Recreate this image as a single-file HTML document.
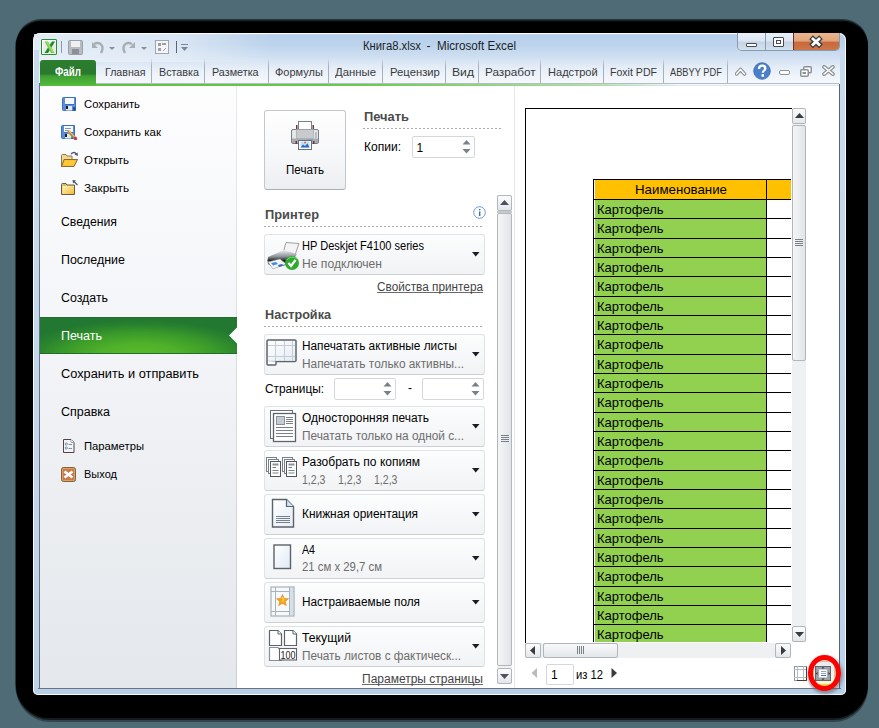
<!DOCTYPE html><html><head><meta charset="utf-8"><style>html,body{margin:0;padding:0;width:879px;height:728px;overflow:hidden;position:relative}body{font-family:"Liberation Sans",sans-serif}</style></head><body><div style="position:absolute;left:0;top:0;width:879px;height:728px;background:#4f6b75"></div>
<div style="position:absolute;left:16px;top:22px;width:852px;height:696px;background:#000;border-radius:25px 25px 34px 34px;box-shadow:0 -1.5px 0 0 rgba(0,0,0,0.8),0 -3px 0 0 rgba(0,0,0,0.5),-1px 0 0 0 rgba(0,0,0,0.5),0 2px 0 0 rgba(0,0,0,0.6),0 4px 0 0 rgba(0,0,0,0.35)"></div>
<div style="position:absolute;left:33px;top:33px;width:813px;height:662px;border-radius:7px 7px 5px 5px;background:linear-gradient(#e6eef8 0px,#b6cfea 2px,#bcd3ec 12px,#cfdff1 24px,#e4edf7 34px,#f0f5fb 44px,#f7f9fc 52px,#c0d4eb 53px,#b8cfe8 100%);box-shadow:inset 0 0 0 1px rgba(255,255,255,0.85)"></div>
<div style="position:absolute;left:34px;top:34px;width:500px;height:28px;background:linear-gradient(95deg,rgba(236,242,249,0.8) 0,rgba(236,242,249,0.65) 140px,rgba(236,242,249,0) 240px)"></div>
<div style="position:absolute;left:737px;top:33px;width:103px;height:18px;border:1px solid #8a9bb0;border-top:none;border-radius:0 0 5px 5px;overflow:hidden;box-sizing:border-box">
<div style="position:absolute;left:0;top:0;width:27px;height:18px;background:linear-gradient(#e9f0f8,#dbe5f1 45%,#c5d3e3 50%,#d6e2ef)"></div>
<div style="position:absolute;left:27px;top:0;width:1px;height:18px;background:#8a9bb0"></div>
<div style="position:absolute;left:28px;top:0;width:27px;height:18px;background:linear-gradient(#e9f0f8,#dbe5f1 45%,#c5d3e3 50%,#d6e2ef)"></div>
<div style="position:absolute;left:55px;top:0;width:1px;height:18px;background:#6a3030"></div>
<div style="position:absolute;left:56px;top:0;width:47px;height:18px;background:linear-gradient(#eab690,#e3a57a 45%,#c8693e 50%,#cc7848)"></div>
</div>
<div style="position:absolute;left:746px;top:43px;width:11px;height:4px;background:#fff;border:1px solid #444c58;border-radius:1px;box-sizing:border-box"></div>
<div style="position:absolute;left:773px;top:37px;width:11px;height:10px;border:1px solid #444c58;background:#fff;box-sizing:border-box;border-radius:1px"><div style="position:absolute;left:2px;top:2px;width:5px;height:4px;border:1px solid #444c58;box-sizing:border-box"></div></div>
<svg style="position:absolute;left:808px;top:34px" width="16" height="15"><path d="M5 5 L11 10.5 M11 5 L5 10.5" stroke="#3a3e46" stroke-width="5.4" stroke-linecap="square"/><path d="M5 5 L11 10.5 M11 5 L5 10.5" stroke="#fff" stroke-width="2.8" stroke-linecap="square"/></svg>
<div style="position:absolute;left:41px;top:39px;width:16px;height:16px;box-sizing:border-box;border:1px solid #2f8a35;border-radius:1px;background:linear-gradient(135deg,#fff,#dfeedd)"></div>
<svg style="position:absolute;left:41px;top:39px" width="16" height="16"><path d="M2 14 L2 2.5 L13.5 2.5 L13.5 14 Z" fill="#e0e2e4" opacity="0.5"/><path d="M11 2.5 L14 2.5 L7 14 L3.5 14 Z" fill="#1a8a2a"/><path d="M3.5 2.5 L7 2.5 L13.5 14 L10 14 Z" fill="#7ad04a"/><path d="M5 2.5 L6.5 2.5 L12.5 13 L11 13 Z" fill="#a8e070" opacity="0.7"/></svg>
<div style="position:absolute;left:61px;top:41px;width:1px;height:12px;background:#8c9aa8"></div>
<svg style="position:absolute;left:68px;top:40px" width="16" height="15"><rect x="0.5" y="0.5" width="14" height="14" rx="1" fill="#b8bcc0" stroke="#9aa0a6"/><rect x="3" y="1" width="9" height="6" fill="#eef0f2"/><rect x="4" y="9" width="7" height="5" fill="#8a9096"/></svg>
<svg style="position:absolute;left:90px;top:40px" width="58" height="15"><path d="M4 4 C10 1 15 6 11 13" stroke="#a8aeb4" stroke-width="2.5" fill="none"/><path d="M2 2 L2 8 L8 8 Z" fill="#a8aeb4"/><path d="M19 7 L25 7 L22 10 Z" fill="#8a9098"/><path d="M42 4 C36 1 31 6 35 13" stroke="#a8aeb4" stroke-width="2.5" fill="none"/><path d="M45 2 L45 8 L39 8 Z" fill="#a8aeb4"/><path d="M51 7 L57 7 L54 10 Z" fill="#8a9098"/></svg>
<svg style="position:absolute;left:155px;top:40px" width="15" height="15"><rect x="0.5" y="0.5" width="13" height="13" fill="#f4f5f6" stroke="#a0a6ac"/><rect x="3" y="3" width="3" height="3" fill="#9aa0a6"/><rect x="7" y="3" width="4" height="2" fill="#9aa0a6"/><rect x="3" y="8" width="3" height="3" fill="#9aa0a6"/><path d="M8 11 L11 8" stroke="#9aa0a6"/></svg>
<div style="position:absolute;left:176px;top:41px;width:1px;height:12px;background:#5c6670"></div>
<svg style="position:absolute;left:180px;top:44px" width="10" height="8"><rect x="1" y="0" width="7" height="1" fill="#7c8690"/><path d="M1 3 L8 3 L4.5 7 Z" fill="#7c8690"/></svg>
<div style="position:absolute;left:40px;top:83px;width:799px;height:1px;background:#b4bcc4"></div>
<div style="position:absolute;left:40px;top:84px;width:799px;height:2px;background:linear-gradient(90deg,#5cbf3c,#6cc850 40%,rgba(140,210,120,0.6) 70%,rgba(200,230,200,0) 80%)"></div>
<div style="position:absolute;left:40px;top:60px;width:56px;height:25px;border-radius:3px 3px 0 0;background:linear-gradient(#2c7d2e,#2a7a2e 55%,#3fa134 65%,#52b83a)"></div>
<div style="position:absolute;left:151px;top:59px;width:1px;height:24px;background:linear-gradient(rgba(170,180,190,0.2),#a8b0b8 30%,#a8b0b8)"></div>
<div style="position:absolute;left:204px;top:59px;width:1px;height:24px;background:linear-gradient(rgba(170,180,190,0.2),#a8b0b8 30%,#a8b0b8)"></div>
<div style="position:absolute;left:268px;top:59px;width:1px;height:24px;background:linear-gradient(rgba(170,180,190,0.2),#a8b0b8 30%,#a8b0b8)"></div>
<div style="position:absolute;left:328px;top:59px;width:1px;height:24px;background:linear-gradient(rgba(170,180,190,0.2),#a8b0b8 30%,#a8b0b8)"></div>
<div style="position:absolute;left:382px;top:59px;width:1px;height:24px;background:linear-gradient(rgba(170,180,190,0.2),#a8b0b8 30%,#a8b0b8)"></div>
<div style="position:absolute;left:445px;top:59px;width:1px;height:24px;background:linear-gradient(rgba(170,180,190,0.2),#a8b0b8 30%,#a8b0b8)"></div>
<div style="position:absolute;left:478px;top:59px;width:1px;height:24px;background:linear-gradient(rgba(170,180,190,0.2),#a8b0b8 30%,#a8b0b8)"></div>
<div style="position:absolute;left:540px;top:59px;width:1px;height:24px;background:linear-gradient(rgba(170,180,190,0.2),#a8b0b8 30%,#a8b0b8)"></div>
<div style="position:absolute;left:603px;top:59px;width:1px;height:24px;background:linear-gradient(rgba(170,180,190,0.2),#a8b0b8 30%,#a8b0b8)"></div>
<div style="position:absolute;left:663px;top:59px;width:1px;height:24px;background:linear-gradient(rgba(170,180,190,0.2),#a8b0b8 30%,#a8b0b8)"></div>
<div style="position:absolute;left:727px;top:59px;width:1px;height:24px;background:linear-gradient(rgba(170,180,190,0.2),#a8b0b8 30%,#a8b0b8)"></div>
<svg style="position:absolute;left:735px;top:67px" width="12" height="9"><path d="M1.5 7 L5.5 2.5 L9.5 7" stroke="#8c9298" stroke-width="3.6" fill="none" stroke-linejoin="round" stroke-linecap="round"/><path d="M1.5 7 L5.5 2.5 L9.5 7" stroke="#fff" stroke-width="1.4" fill="none" stroke-linejoin="round" stroke-linecap="round"/></svg>
<svg style="position:absolute;left:753px;top:62px" width="18" height="18"><circle cx="9" cy="9" r="8.3" fill="#4a80c8" stroke="#3a6aae" stroke-width="0.8"/><path d="M6 7 C6 4.6 7.5 3.6 9.2 3.6 C11 3.6 12.3 4.8 12.3 6.4 C12.3 8.4 9.8 8.6 9.8 10.8" stroke="#fff" stroke-width="2.3" fill="none"/><rect x="8.5" y="12.2" width="2.5" height="2.5" fill="#fff"/></svg>
<div style="position:absolute;left:779px;top:70px;width:11px;height:5px;border:1.5px solid #8c9298;border-radius:2px;box-sizing:border-box;background:#fff"></div>
<svg style="position:absolute;left:800px;top:66px" width="12" height="11"><rect x="3.75" y="0.75" width="7.5" height="6" rx="1" fill="#fff" stroke="#8c9298" stroke-width="1.5"/><rect x="0.75" y="3.75" width="7.5" height="6.5" rx="1" fill="#fff" stroke="#8c9298" stroke-width="1.5"/><rect x="2.5" y="6" width="3.5" height="2" fill="#8c9298"/></svg>
<svg style="position:absolute;left:822px;top:65px" width="13" height="11"><path d="M2.2 2 L10.8 9 M10.8 2 L2.2 9" stroke="#8c9298" stroke-width="4" stroke-linecap="round"/><path d="M2.2 2 L10.8 9 M10.8 2 L2.2 9" stroke="#fff" stroke-width="1.6" stroke-linecap="round"/></svg>
<div style="position:absolute;left:39px;top:86px;width:801px;height:602px;background:#fff"></div>
<div style="position:absolute;left:34px;top:50px;width:5px;height:639px;background:linear-gradient(#c8daee,#bcd2ea)"></div>
<div style="position:absolute;left:840px;top:50px;width:5px;height:639px;background:linear-gradient(#c8daee,#bcd2ea)"></div>
<div style="position:absolute;left:39px;top:83px;width:1px;height:606px;background:#6a7480"></div>
<div style="position:absolute;left:38px;top:688px;width:803px;height:1px;background:#6a7480"></div>
<div style="position:absolute;left:839px;top:84px;width:1px;height:605px;background:#5a6470"></div>
<div style="position:absolute;left:40px;top:86px;width:196px;height:602px;background:linear-gradient(#fdfdfe,#f3f5f8 40%,#e4e7eb)"></div>
<div style="position:absolute;left:236px;top:86px;width:1px;height:602px;background:linear-gradient(#e8ebee,#c9ced4)"></div>
<div style="position:absolute;left:40px;top:317px;width:197px;height:37px;box-sizing:border-box;border-top:1px solid #1f6f2c;border-bottom:1px solid #1f6f2c;background:radial-gradient(ellipse 120px 36px at 100px 38px,#5cbc2c,#4fb02a 35%,#3a9a2a 65%,#2a842e 85%,#227830)"></div>
<svg style="position:absolute;left:228px;top:327px" width="10" height="18"><path d="M9.5 0 L1 8.5 L9.5 17 Z" fill="#fff"/></svg>
<svg style="position:absolute;left:62px;top:97px" width="15" height="15"><path d="M0.5 1.5 Q0.5 0.5 1.5 0.5 H13.5 V13.5 H1.5 Q0.5 13.5 0.5 12.5 Z" fill="#5b8fd9" stroke="#3d6fbf"/><rect x="3" y="1" width="9" height="6" fill="#f4f7fb"/><rect x="3" y="7" width="9" height="1" fill="#3d6fbf"/><rect x="4" y="9" width="6" height="4.5" fill="#dfe8f3"/><rect x="4" y="9" width="2" height="3" fill="#1a1a2a"/><rect x="11" y="10" width="2.5" height="3.5" fill="#2050a0"/></svg>
<svg style="position:absolute;left:61px;top:125px" width="15" height="15"><path d="M0.5 1.5 Q0.5 0.5 1.5 0.5 H13.5 V13.5 H1.5 Q0.5 13.5 0.5 12.5 Z" fill="#5b8fd9" stroke="#3d6fbf"/><rect x="3" y="1" width="9" height="6" fill="#f4f7fb"/><rect x="3" y="7" width="9" height="1" fill="#3d6fbf"/><rect x="4" y="9" width="6" height="4.5" fill="#dfe8f3"/><rect x="4" y="9" width="2" height="3" fill="#1a1a2a"/><rect x="11" y="10" width="2.5" height="3.5" fill="#2050a0"/></svg>
<svg style="position:absolute;left:61px;top:125px" width="17" height="15"><path d="M4 3.5 H10 M4 5.5 H8" stroke="#8a96a4"/><path d="M7 6 L14 13" stroke="#d89040" stroke-width="3"/><path d="M7.5 5.5 L13.5 11.5" stroke="#f0c070" stroke-width="1"/><path d="M9 9 L14.5 14.5" stroke="#60a040" stroke-width="1"/><circle cx="14.5" cy="13.5" r="1.7" fill="#c04050"/></svg>
<svg style="position:absolute;left:61px;top:151px" width="18" height="17"><path d="M0.5 4.5 Q0.5 3.5 1.5 3.5 H5 L6 5 H11 V15.5 H0.5 Z" fill="#f6d78a" stroke="#8a7a5a"/><path d="M3 8.5 H16.5 L13 15.5 H0.5 Z" fill="#f8b820" stroke="#8a6a3a"/><path d="M4 9.5 H15 L12.5 14.5 H2 Z" fill="#fcc83a"/><path d="M10 3 Q13 0 15.5 3" stroke="#4a5a6a" stroke-width="1.3" fill="none"/><path d="M13.5 3.5 L17 5 L16.5 1.5 Z" fill="#4a5a6a"/></svg>
<svg style="position:absolute;left:61px;top:179px" width="18" height="17"><path d="M0.5 5.5 Q0.5 4.5 1.5 4.5 H5 L6 6 H13.5 V15.5 H0.5 Z" fill="#f2c670" stroke="#6a5a4a"/><path d="M1.5 7 H13 V15 H1.5 Z" fill="url(#fg)"/><defs><linearGradient id="fg" x1="0" y1="0" x2="1" y2="1"><stop offset="0" stop-color="#fff6c0"/><stop offset="1" stop-color="#f4b830"/></linearGradient></defs><path d="M2 6 H5" stroke="#8ac060"/><path d="M16.5 6 L12.5 2" stroke="#4a5a6a" stroke-width="1.3"/><path d="M11.5 1 L15 1.5 L12 4.5 Z" fill="#4a5a6a"/></svg>
<svg style="position:absolute;left:63px;top:439px" width="12" height="14"><path d="M0.5 0.5 H8 L11 3.5 V13.5 H0.5 Z" fill="#f0f4f8" stroke="#5a4040"/><path d="M8 0.5 V3.5 H11" fill="#fff" stroke="#8a96a4" stroke-width="0.8"/><circle cx="3.3" cy="5" r="1.1" fill="none" stroke="#6a7a8a" stroke-width="0.8"/><circle cx="3.3" cy="9" r="1.1" fill="none" stroke="#6a7a8a" stroke-width="0.8"/><path d="M5.5 5.5 H9 M5.5 9.5 H9" stroke="#6a7a8a" stroke-width="0.8"/></svg>
<svg style="position:absolute;left:61px;top:467px" width="15" height="15"><rect x="0.5" y="0.5" width="14" height="14" rx="2" fill="#c87a4a" stroke="#7a6a30"/><rect x="1.5" y="1.5" width="12" height="12" rx="1" fill="none" stroke="#e8a478" stroke-width="0.8"/><path d="M3.5 4.5 L11.5 10.5 M11.5 4.5 L3.5 10.5" stroke="#fff" stroke-width="2.6"/></svg>
<div style="position:absolute;left:237px;top:86px;width:278px;height:602px;background:#fff"></div>
<div style="position:absolute;left:514px;top:86px;width:1px;height:602px;background:#e4e8ec"></div>
<div style="position:absolute;left:264px;top:110px;width:82px;height:80px;box-sizing:border-box;border:1px solid #c4c8cc;border-bottom-color:#a8aeb4;border-radius:3px;background:linear-gradient(#fefefe,#f6f7f9 60%,#eceef1)"></div>
<svg style="position:absolute;left:290px;top:120px" width="30" height="31"><rect x="8.5" y="1.5" width="13" height="9" fill="#fff" stroke="#7a8088"/><rect x="6" y="5" width="1.5" height="4" fill="#6a3a3a"/><rect x="22.5" y="5" width="1.5" height="4" fill="#6a3a3a"/><rect x="1.5" y="9.5" width="27" height="14" rx="1.5" fill="#e4e6e8" stroke="#7a8088"/><rect x="6.5" y="9.5" width="17" height="9" fill="#c8cacc" stroke="#9aa0a6" stroke-width="0.6"/><rect x="2" y="18.5" width="26" height="4.5" fill="#a8acb0"/><rect x="18" y="19.5" width="5" height="1.5" fill="#6aa0e0"/><path d="M25 13 H27 M25 15 H27 M25 17 H27" stroke="#7a8088" stroke-width="0.8"/><rect x="5.5" y="21" width="1.5" height="3" fill="#6a3a3a"/><rect x="23" y="21" width="1.5" height="3" fill="#6a3a3a"/><rect x="8.5" y="20.5" width="13" height="9" fill="#fff" stroke="#6a7078"/><rect x="10.5" y="21.5" width="9" height="6" fill="#bfe0f8"/><path d="M10.5 27.5 L13 24.5 L15 26 L17.5 23.5 L19.5 27.5 Z" fill="#2a6ac8"/><circle cx="15" cy="22.5" r="1" fill="#e06a3a"/></svg>
<div style="position:absolute;left:363px;top:128px;width:138px;height:1px;background:repeating-linear-gradient(90deg,#a8acb0 0 2px,transparent 2px 4px)"></div>
<div style="position:absolute;left:412px;top:136px;width:63px;height:22px;box-sizing:border-box;border:1px solid #d4d8dc;border-radius:2px;background:#fff"></div>
<svg style="position:absolute;left:462px;top:139px" width="9" height="16"><path d="M0.5 5.5 L8.5 5.5 L4.5 1 Z" fill="#7a8088"/><path d="M0.5 10 L8.5 10 L4.5 14.5 Z" fill="#7a8088"/></svg>
<svg style="position:absolute;left:473px;top:206px" width="13" height="13"><circle cx="6.5" cy="6.5" r="5.8" fill="#fff" stroke="#6a9ad8"/><rect x="6" y="5.5" width="1.4" height="4.5" fill="#3a6ac0"/><rect x="6" y="3" width="1.4" height="1.4" fill="#3a6ac0"/></svg>
<div style="position:absolute;left:264px;top:226px;width:220px;height:1px;background:repeating-linear-gradient(90deg,#a8acb0 0 2px,transparent 2px 4px)"></div>
<div style="position:absolute;left:264px;top:234px;width:221px;height:41px;box-sizing:border-box;border:1px solid #dfe2e6;border-bottom-color:#cdd1d6;border-radius:3px;background:linear-gradient(#fcfdfd,#f7f8f9 50%,#f1f3f5)"></div>
<svg style="position:absolute;left:472px;top:252px" width="8" height="5"><path d="M0 0 L7.5 0 L3.75 4.5 Z" fill="#1a1e24"/></svg>
<svg style="position:absolute;left:266px;top:240px" width="34" height="34"><defs><linearGradient id="pb" x1="0" y1="0" x2="0" y2="1"><stop offset="0" stop-color="#f0f2f4"/><stop offset="0.45" stop-color="#8a9098"/><stop offset="0.7" stop-color="#2a2426"/><stop offset="1" stop-color="#3a3032"/></linearGradient></defs><path d="M20 2.5 L33 3.5 L29 15 L17 13 Z" fill="#f4f4f4" stroke="#8a8a8a" stroke-width="0.8"/><path d="M2 17 L18 10 L31 14 L26 22 L6 25 L1.5 21 Z" fill="url(#pb)"/><path d="M1.5 20 L6 24 L26 21 L24 24 L8 28 L2 24 Z" fill="#5a2a2a" opacity="0.8"/><path d="M2 22 L14 19 L20 24 L7 29 Z" fill="#f4f6f8" stroke="#9aa0a6" stroke-width="0.6"/><path d="M5 23 L10 22 L12 24 L7 25.5 Z" fill="#4a88e0"/><path d="M12 25 L16 24 L17.5 25.5 L13 27 Z" fill="#2a68c8"/><circle cx="26" cy="23" r="7" fill="#2eaa30"/><path d="M21 20 A6.5 6.5 0 0 1 31 19" stroke="#7ad870" stroke-width="1" fill="none"/><path d="M22.5 23 L25 26 L29.5 20" stroke="#fff" stroke-width="2.2" fill="none"/></svg>
<div style="position:absolute;left:377px;top:292px;width:106px;height:1px;background:#6a6a6a"></div>
<div style="position:absolute;left:264px;top:326px;width:220px;height:1px;background:repeating-linear-gradient(90deg,#a8acb0 0 2px,transparent 2px 4px)"></div>
<div style="position:absolute;left:264px;top:334px;width:221px;height:41px;box-sizing:border-box;border:1px solid #dfe2e6;border-bottom-color:#cdd1d6;border-radius:3px;background:linear-gradient(#fcfdfd,#f7f8f9 50%,#f1f3f5)"></div>
<svg style="position:absolute;left:472px;top:352px" width="8" height="5"><path d="M0 0 L7.5 0 L3.75 4.5 Z" fill="#1a1e24"/></svg>
<div style="position:absolute;left:334px;top:378px;width:62px;height:22px;box-sizing:border-box;border:1px solid #d4d8dc;border-radius:2px;background:#fff"></div>
<svg style="position:absolute;left:383px;top:381px" width="9" height="16"><path d="M0.5 5.5 L8.5 5.5 L4.5 1 Z" fill="#7a8088"/><path d="M0.5 10 L8.5 10 L4.5 14.5 Z" fill="#7a8088"/></svg>
<div style="position:absolute;left:422px;top:378px;width:62px;height:22px;box-sizing:border-box;border:1px solid #d4d8dc;border-radius:2px;background:#fff"></div>
<svg style="position:absolute;left:471px;top:381px" width="9" height="16"><path d="M0.5 5.5 L8.5 5.5 L4.5 1 Z" fill="#7a8088"/><path d="M0.5 10 L8.5 10 L4.5 14.5 Z" fill="#7a8088"/></svg>
<div style="position:absolute;left:264px;top:406px;width:221px;height:41px;box-sizing:border-box;border:1px solid #dfe2e6;border-bottom-color:#cdd1d6;border-radius:3px;background:linear-gradient(#fcfdfd,#f7f8f9 50%,#f1f3f5)"></div>
<svg style="position:absolute;left:472px;top:424px" width="8" height="5"><path d="M0 0 L7.5 0 L3.75 4.5 Z" fill="#1a1e24"/></svg>
<div style="position:absolute;left:264px;top:450px;width:221px;height:41px;box-sizing:border-box;border:1px solid #dfe2e6;border-bottom-color:#cdd1d6;border-radius:3px;background:linear-gradient(#fcfdfd,#f7f8f9 50%,#f1f3f5)"></div>
<svg style="position:absolute;left:472px;top:468px" width="8" height="5"><path d="M0 0 L7.5 0 L3.75 4.5 Z" fill="#1a1e24"/></svg>
<div style="position:absolute;left:264px;top:494px;width:221px;height:41px;box-sizing:border-box;border:1px solid #dfe2e6;border-bottom-color:#cdd1d6;border-radius:3px;background:linear-gradient(#fcfdfd,#f7f8f9 50%,#f1f3f5)"></div>
<svg style="position:absolute;left:472px;top:512px" width="8" height="5"><path d="M0 0 L7.5 0 L3.75 4.5 Z" fill="#1a1e24"/></svg>
<div style="position:absolute;left:264px;top:538px;width:221px;height:41px;box-sizing:border-box;border:1px solid #dfe2e6;border-bottom-color:#cdd1d6;border-radius:3px;background:linear-gradient(#fcfdfd,#f7f8f9 50%,#f1f3f5)"></div>
<svg style="position:absolute;left:472px;top:556px" width="8" height="5"><path d="M0 0 L7.5 0 L3.75 4.5 Z" fill="#1a1e24"/></svg>
<div style="position:absolute;left:264px;top:582px;width:221px;height:41px;box-sizing:border-box;border:1px solid #dfe2e6;border-bottom-color:#cdd1d6;border-radius:3px;background:linear-gradient(#fcfdfd,#f7f8f9 50%,#f1f3f5)"></div>
<svg style="position:absolute;left:472px;top:600px" width="8" height="5"><path d="M0 0 L7.5 0 L3.75 4.5 Z" fill="#1a1e24"/></svg>
<div style="position:absolute;left:264px;top:626px;width:221px;height:41px;box-sizing:border-box;border:1px solid #dfe2e6;border-bottom-color:#cdd1d6;border-radius:3px;background:linear-gradient(#fcfdfd,#f7f8f9 50%,#f1f3f5)"></div>
<svg style="position:absolute;left:472px;top:644px" width="8" height="5"><path d="M0 0 L7.5 0 L3.75 4.5 Z" fill="#1a1e24"/></svg>
<div style="position:absolute;left:362px;top:684px;width:121px;height:1px;background:#6a6a6a"></div>
<svg style="position:absolute;left:266px;top:339px" width="32" height="27"><rect x="1" y="1" width="29" height="21.5" rx="1" fill="#fff" stroke="#5c636b" stroke-width="1.5"/><rect x="2" y="2" width="27" height="19.5" fill="url(#sg)"/><defs><linearGradient id="sg" x1="0" y1="0" x2="1" y2="1"><stop offset="0" stop-color="#fff"/><stop offset="1" stop-color="#e2ecf7"/></linearGradient></defs><path d="M9.5 2 V22 M18.5 2 V22 M26.5 2 V22 M2 6.5 H29 M2 17.5 H29" stroke="#c8ccd0" stroke-width="1"/><path d="M1 22 V25 Q1 26 2 26 H9 Q10 26 10 25 V22.5" fill="#fff" stroke="#5c636b" stroke-width="1.5"/></svg>
<svg style="position:absolute;left:269px;top:409px" width="29" height="34"><rect x="1.5" y="1.5" width="22" height="28" fill="#fff" stroke="#6a7078"/><rect x="4.5" y="4.5" width="22" height="28" fill="#fff" stroke="#5c636b" stroke-width="1.3"/><rect x="7.5" y="7.5" width="8" height="8" fill="#c8ccd2" stroke="#8a9098"/><path d="M10 14 L14 10" stroke="#a8c8e8"/><path d="M17 8.5 H24 M17 10.5 H24 M17 12.5 H24 M17 14.5 H24 M7 18.5 H24 M7 21.5 H24 M7 24.5 H24 M7 27.5 H24" stroke="#7a8088" stroke-width="1"/></svg>
<svg style="position:absolute;left:266px;top:457px" width="34" height="22"><g transform="translate(0,0)"><rect x="0.5" y="0.5" width="10" height="14" fill="#fff" stroke="#7a8088"/><rect x="2.5" y="2.5" width="10" height="14" fill="#fff" stroke="#7a8088"/><rect x="4.5" y="4.5" width="10" height="15" fill="#fff" stroke="#50565e"/><path d="M6.5 7.5 H12.5" stroke="#8a9098" stroke-width="2"/><path d="M6.5 10.5 H10 M6.5 13.5 H12.5 M6.5 16 H12.5" stroke="#7a8088"/></g><g transform="translate(16,0)"><rect x="0.5" y="0.5" width="10" height="14" fill="#fff" stroke="#7a8088"/><rect x="2.5" y="2.5" width="10" height="14" fill="#fff" stroke="#7a8088"/><rect x="4.5" y="4.5" width="10" height="15" fill="#fff" stroke="#50565e"/><path d="M6.5 7.5 H12.5" stroke="#8a9098" stroke-width="2"/><path d="M6.5 10.5 H10 M6.5 13.5 H12.5 M6.5 16 H12.5" stroke="#7a8088"/></g></svg>
<svg style="position:absolute;left:271px;top:498px" width="24" height="31"><path d="M1.5 1.5 H15.5 L22.5 8.5 V29 H1.5 Z" fill="url(#pg)" stroke="#5c636b" stroke-width="1.4"/><defs><linearGradient id="pg" x1="0" y1="0" x2="1" y2="1"><stop offset="0" stop-color="#fff"/><stop offset="1" stop-color="#e4edf7"/></linearGradient></defs><path d="M15.5 1.5 V8.5 H22.5" fill="#cfe0f2" stroke="#5c636b" stroke-width="1.2"/><path d="M5 18.5 H19 M5 20.5 H19 M5 22.5 H19 M5 24.5 H19" stroke="#7a8088" stroke-width="1"/><path d="M5 20.5 H8" stroke="#5a9ad8"/></svg>
<svg style="position:absolute;left:273px;top:544px" width="19" height="26"><rect x="1" y="1" width="16.5" height="23.5" fill="url(#pg2)" stroke="#5c636b" stroke-width="1.4"/><defs><linearGradient id="pg2" x1="0" y1="0" x2="1" y2="1"><stop offset="0" stop-color="#fff"/><stop offset="1" stop-color="#e0eaf5"/></linearGradient></defs></svg>
<svg style="position:absolute;left:270px;top:586px" width="26" height="32"><rect x="1" y="1" width="23" height="29" fill="#f6f9fc" stroke="#a8b0b8" stroke-width="1.2"/><path d="M5.5 1 V30 M19.5 1 V30 M1 5.5 H24 M1 25.5 H24" stroke="#aab2ba" stroke-width="1"/><rect x="20" y="2" width="3" height="27" fill="#d4e0ec"/><path d="M12.5 8.5 L14.3 12.4 L18.5 12.8 L15.3 15.5 L16.3 19.6 L12.5 17.4 L8.7 19.6 L9.7 15.5 L6.5 12.8 L10.7 12.4 Z" fill="#f4a418" stroke="#e08a10" stroke-width="0.6"/><path d="M12.5 11 L13.4 14 L12.5 16" stroke="#ffe080" stroke-width="1" fill="none"/></svg>
<svg style="position:absolute;left:268px;top:629px" width="31" height="33"><path d="M1.5 1.5 H10 L13.5 5 V16.5 H1.5 Z" fill="#fff" stroke="#5c636b" stroke-width="1.2"/><path d="M10 1.5 V5 H13.5" fill="#fff" stroke="#5c636b"/><path d="M16.5 1.5 H25 L28.5 5 V16.5 H16.5 Z" fill="#fff" stroke="#5c636b" stroke-width="1.2"/><path d="M25 1.5 V5 H28.5" fill="#fff" stroke="#5c636b"/><path d="M1.5 18.5 H10 L13.5 22 V31.5 H1.5 Z" fill="#fff" stroke="#8a9098" stroke-width="1.2"/><rect x="11.5" y="19.5" width="17" height="11.5" fill="#fff" stroke="#5c636b" stroke-width="1.1"/><text x="12.5" y="29.5" font-family="Liberation Sans" font-size="11" fill="#2a2020" textLength="15" lengthAdjust="spacingAndGlyphs">100</text></svg>
<div style="position:absolute;left:497px;top:195px;width:15px;height:489px;background:#eef0f2"></div>
<div style="position:absolute;left:497px;top:195px;width:15px;height:16px;box-sizing:border-box;border:1px solid #b0b6bc;border-radius:2px;background:linear-gradient(#fcfcfd,#e4e7ea)"></div>
<div style="position:absolute;left:497px;top:211px;width:15px;height:2px;background:#c4cad0"></div>
<div style="position:absolute;left:497px;top:213px;width:15px;height:453px;box-sizing:border-box;border:1px solid #b0b6bc;border-radius:2px;background:linear-gradient(90deg,#f4f5f6,#e2e5e8)"></div>
<div style="position:absolute;left:497px;top:668px;width:15px;height:16px;box-sizing:border-box;border:1px solid #b0b6bc;border-radius:2px;background:linear-gradient(#fcfcfd,#e4e7ea)"></div>
<svg style="position:absolute;left:500px;top:200px" width="9" height="6"><path d="M0 5 L9 5 L4.5 0 Z" fill="#4a5260"/></svg>
<svg style="position:absolute;left:500px;top:674px" width="9" height="6"><path d="M0 0 L9 0 L4.5 5 Z" fill="#4a5260"/></svg>
<div style="position:absolute;left:501px;top:435px;width:8px;height:7px;background:repeating-linear-gradient(#7a8088 0 1px,transparent 1px 2px)"></div>
<div style="position:absolute;left:515px;top:86px;width:324px;height:602px;background:#fff"></div>
<div style="position:absolute;left:525px;top:108px;width:267px;height:535px;box-sizing:border-box;border:1px solid #000;border-right:none;border-bottom:none;background:#fff"></div>
<div style="position:absolute;left:593px;top:179px;width:198px;height:463px;overflow:hidden"><div style="position:absolute;left:2px;top:0;width:198px;height:21px;background:#ffc000"></div><div style="position:absolute;left:2px;top:21px;width:172px;height:450px;background:#92d050"></div><div style="position:absolute;left:0;top:0;width:200px;height:1px;background:#000"></div><div style="position:absolute;left:0;top:20px;width:200px;height:1px;background:#000"></div><div style="position:absolute;left:0;top:39px;width:200px;height:1px;background:#000"></div><div style="position:absolute;left:0;top:59px;width:200px;height:1px;background:#000"></div><div style="position:absolute;left:0;top:78px;width:200px;height:1px;background:#000"></div><div style="position:absolute;left:0;top:97px;width:200px;height:1px;background:#000"></div><div style="position:absolute;left:0;top:117px;width:200px;height:1px;background:#000"></div><div style="position:absolute;left:0;top:136px;width:200px;height:1px;background:#000"></div><div style="position:absolute;left:0;top:155px;width:200px;height:1px;background:#000"></div><div style="position:absolute;left:0;top:175px;width:200px;height:1px;background:#000"></div><div style="position:absolute;left:0;top:194px;width:200px;height:1px;background:#000"></div><div style="position:absolute;left:0;top:213px;width:200px;height:1px;background:#000"></div><div style="position:absolute;left:0;top:233px;width:200px;height:1px;background:#000"></div><div style="position:absolute;left:0;top:252px;width:200px;height:1px;background:#000"></div><div style="position:absolute;left:0;top:271px;width:200px;height:1px;background:#000"></div><div style="position:absolute;left:0;top:291px;width:200px;height:1px;background:#000"></div><div style="position:absolute;left:0;top:310px;width:200px;height:1px;background:#000"></div><div style="position:absolute;left:0;top:329px;width:200px;height:1px;background:#000"></div><div style="position:absolute;left:0;top:349px;width:200px;height:1px;background:#000"></div><div style="position:absolute;left:0;top:368px;width:200px;height:1px;background:#000"></div><div style="position:absolute;left:0;top:387px;width:200px;height:1px;background:#000"></div><div style="position:absolute;left:0;top:407px;width:200px;height:1px;background:#000"></div><div style="position:absolute;left:0;top:426px;width:200px;height:1px;background:#000"></div><div style="position:absolute;left:0;top:445px;width:200px;height:1px;background:#000"></div><div style="position:absolute;left:0;top:0;width:1px;height:470px;background:#000"></div><div style="position:absolute;left:173px;top:0;width:1px;height:470px;background:#000"></div></div>
<div style="position:absolute;left:792px;top:108px;width:14px;height:534px;background:#eef0f2"></div>
<div style="position:absolute;left:792px;top:108px;width:14px;height:16px;box-sizing:border-box;border:1px solid #b0b6bc;border-radius:2px;background:linear-gradient(#fcfcfd,#e4e7ea)"></div>
<div style="position:absolute;left:792px;top:125px;width:14px;height:236px;box-sizing:border-box;border:1px solid #b0b6bc;border-radius:2px;background:linear-gradient(90deg,#f4f5f6,#e2e5e8)"></div>
<div style="position:absolute;left:792px;top:626px;width:14px;height:16px;box-sizing:border-box;border:1px solid #b0b6bc;border-radius:2px;background:linear-gradient(#fcfcfd,#e4e7ea)"></div>
<svg style="position:absolute;left:795px;top:113px" width="9" height="6"><path d="M0 5 L9 5 L4.5 0 Z" fill="#3a3a3a"/></svg>
<svg style="position:absolute;left:795px;top:632px" width="9" height="6"><path d="M0 0 L9 0 L4.5 5 Z" fill="#3a3a3a"/></svg>
<div style="position:absolute;left:795px;top:239px;width:8px;height:7px;background:repeating-linear-gradient(#7a8088 0 1px,transparent 1px 2px)"></div>
<div style="position:absolute;left:525px;top:643px;width:266px;height:15px;background:#eef0f2"></div>
<div style="position:absolute;left:525px;top:643px;width:16px;height:15px;box-sizing:border-box;border:1px solid #b0b6bc;border-radius:2px;background:linear-gradient(#fcfcfd,#e4e7ea)"></div>
<div style="position:absolute;left:543px;top:643px;width:75px;height:15px;box-sizing:border-box;border:1px solid #b0b6bc;border-radius:2px;background:linear-gradient(#f8f9fa,#e4e7ea)"></div>
<div style="position:absolute;left:775px;top:643px;width:16px;height:15px;box-sizing:border-box;border:1px solid #b0b6bc;border-radius:2px;background:linear-gradient(#fcfcfd,#e4e7ea)"></div>
<svg style="position:absolute;left:530px;top:646px" width="6" height="9"><path d="M5 0 L5 9 L0 4.5 Z" fill="#3a3a3a"/></svg>
<svg style="position:absolute;left:781px;top:646px" width="6" height="9"><path d="M0 0 L0 9 L5 4.5 Z" fill="#3a3a3a"/></svg>
<div style="position:absolute;left:577px;top:646px;width:7px;height:8px;background:repeating-linear-gradient(90deg,#7a8088 0 1px,transparent 1px 2px)"></div>
<svg style="position:absolute;left:531px;top:668px" width="7" height="11"><path d="M6 0 L6 10 L0.5 5 Z" fill="#b8bcc0"/></svg>
<div style="position:absolute;left:546px;top:664px;width:28px;height:21px;box-sizing:border-box;border:1px solid #d4d8dc;border-radius:2px;background:#fff"></div>
<svg style="position:absolute;left:611px;top:668px" width="7" height="11"><path d="M0.5 0 L0.5 10 L6 5 Z" fill="#3a3a3a"/></svg>
<svg style="position:absolute;left:794px;top:666px" width="13" height="15"><rect x="0.5" y="0.5" width="12" height="14" fill="#fff" stroke="#8a96a4"/><path d="M3.5 0 V15 M9.5 0 V15 M0 3.5 H13 M0 11.5 H13" stroke="#b4bcc4"/><path d="M12.5 1 V14.5 H3" fill="none" stroke="#5a3030" stroke-width="1"/></svg>
<div style="position:absolute;left:806px;top:657px;width:36px;height:36px;border-radius:50%;background:radial-gradient(circle,rgba(120,125,130,0.45) 50%,rgba(120,125,130,0) 70%)"></div>
<div style="position:absolute;left:813px;top:661px;width:22px;height:25px;box-sizing:border-box;border:1px solid #eebc80;border-bottom:2px solid #f8d040;background:linear-gradient(#e8ecf0,#f4f2ea 70%,#fdf4c8);border-radius:3px"></div>
<svg style="position:absolute;left:815px;top:666px" width="16" height="15"><rect x="0.5" y="0.5" width="15" height="14" fill="#9aa0a8" stroke="#60666e"/><rect x="4" y="3.5" width="8" height="8" fill="#fff" stroke="#c8d0d8" stroke-width="0.6"/><path d="M6 5.5 H11 M6 7.5 H11" stroke="#9aa4ae"/><path d="M6 9.5 H11" stroke="#3a78d0"/><path d="M8 0.8 L6.5 2.5 H9.5 Z M8 14.2 L6.5 12.5 H9.5 Z M0.8 7.5 L2.5 6 V9 Z M15.2 7.5 L13.5 6 V9 Z" fill="#5a2a2a"/></svg>
<div style="position:absolute;left:808px;top:655px;width:33px;height:36px;box-sizing:border-box;border:5.5px solid #f00;border-radius:50%;box-shadow:1px 2px 3px 1px rgba(90,95,100,0.55)"></div>
<div id="t0" style="position:absolute;left:363px;top:39.84px;font-size:12px;line-height:12px;font-weight:400;color:#1a1e26;white-space:pre;transform:scaleX(0.9388);transform-origin:0 0;">Книга8.xlsx</div>
<div id="t1" style="position:absolute;left:426.5px;top:39.84px;font-size:12px;line-height:12px;font-weight:400;color:#1a1e26;white-space:pre;">-</div>
<div id="t2" style="position:absolute;left:436.5px;top:39.84px;font-size:12px;line-height:12px;font-weight:400;color:#1a1e26;white-space:pre;transform:scaleX(0.9710);transform-origin:0 0;">Microsoft Excel</div>
<div id="t3" style="position:absolute;left:55px;top:65.84px;font-size:12px;line-height:12px;font-weight:700;color:#fff;white-space:pre;transform:scaleX(0.8145);transform-origin:0 0;">Файл</div>
<div id="t4" style="position:absolute;left:104.5px;top:67.19px;font-size:11px;line-height:11px;font-weight:400;color:#3a3a3a;white-space:pre;transform:scaleX(0.9672);transform-origin:0 0;">Главная</div>
<div id="t5" style="position:absolute;left:158.5px;top:67.19px;font-size:11px;line-height:11px;font-weight:400;color:#3a3a3a;white-space:pre;transform:scaleX(0.9782);transform-origin:0 0;">Вставка</div>
<div id="t6" style="position:absolute;left:211.5px;top:67.19px;font-size:11px;line-height:11px;font-weight:400;color:#3a3a3a;white-space:pre;transform:scaleX(0.9801);transform-origin:0 0;">Разметка</div>
<div id="t7" style="position:absolute;left:274.8px;top:67.19px;font-size:11px;line-height:11px;font-weight:400;color:#3a3a3a;white-space:pre;transform:scaleX(0.9984);transform-origin:0 0;">Формулы</div>
<div id="t8" style="position:absolute;left:335.1px;top:67.19px;font-size:11px;line-height:11px;font-weight:400;color:#3a3a3a;white-space:pre;transform:scaleX(1.0314);transform-origin:0 0;">Данные</div>
<div id="t9" style="position:absolute;left:389.7px;top:67.19px;font-size:11px;line-height:11px;font-weight:400;color:#3a3a3a;white-space:pre;transform:scaleX(1.0256);transform-origin:0 0;">Рецензир</div>
<div id="t10" style="position:absolute;left:452.3px;top:67.19px;font-size:11px;line-height:11px;font-weight:400;color:#3a3a3a;white-space:pre;transform:scaleX(1.1052);transform-origin:0 0;">Вид</div>
<div id="t11" style="position:absolute;left:484.6px;top:67.19px;font-size:11px;line-height:11px;font-weight:400;color:#3a3a3a;white-space:pre;transform:scaleX(1.0681);transform-origin:0 0;">Разработ</div>
<div id="t12" style="position:absolute;left:547.7px;top:67.19px;font-size:11px;line-height:11px;font-weight:400;color:#3a3a3a;white-space:pre;transform:scaleX(1.0059);transform-origin:0 0;">Надстрой</div>
<div id="t13" style="position:absolute;left:610.4px;top:67.19px;font-size:11px;line-height:11px;font-weight:400;color:#3a3a3a;white-space:pre;transform:scaleX(0.9610);transform-origin:0 0;">Foxit PDF</div>
<div id="t14" style="position:absolute;left:670px;top:67.19px;font-size:11px;line-height:11px;font-weight:400;color:#3a3a3a;white-space:pre;transform:scaleX(0.8416);transform-origin:0 0;">ABBYY PDF</div>
<div id="t15" style="position:absolute;left:84px;top:98.69px;font-size:11px;line-height:11px;font-weight:400;color:#000;white-space:pre;transform:scaleX(1.0243);transform-origin:0 0;">Сохранить</div>
<div id="t16" style="position:absolute;left:84px;top:126.69px;font-size:11px;line-height:11px;font-weight:400;color:#000;white-space:pre;transform:scaleX(1.0447);transform-origin:0 0;">Сохранить как</div>
<div id="t17" style="position:absolute;left:84px;top:154.69px;font-size:11px;line-height:11px;font-weight:400;color:#000;white-space:pre;transform:scaleX(1.0416);transform-origin:0 0;">Открыть</div>
<div id="t18" style="position:absolute;left:84px;top:182.69px;font-size:11px;line-height:11px;font-weight:400;color:#000;white-space:pre;transform:scaleX(1.0619);transform-origin:0 0;">Закрыть</div>
<div id="t19" style="position:absolute;left:61px;top:216.42px;font-size:12.5px;line-height:12.5px;font-weight:400;color:#000;white-space:pre;transform:scaleX(0.9806);transform-origin:0 0;">Сведения</div>
<div id="t20" style="position:absolute;left:61px;top:254.42px;font-size:12.5px;line-height:12.5px;font-weight:400;color:#000;white-space:pre;transform:scaleX(0.9954);transform-origin:0 0;">Последние</div>
<div id="t21" style="position:absolute;left:61px;top:292.42px;font-size:12.5px;line-height:12.5px;font-weight:400;color:#000;white-space:pre;transform:scaleX(0.9891);transform-origin:0 0;">Создать</div>
<div id="t22" style="position:absolute;left:61px;top:330.42px;font-size:12.5px;line-height:12.5px;font-weight:400;color:#fff;white-space:pre;transform:scaleX(1.0011);transform-origin:0 0;">Печать</div>
<div id="t23" style="position:absolute;left:61px;top:368.42px;font-size:12.5px;line-height:12.5px;font-weight:400;color:#000;white-space:pre;transform:scaleX(1.0223);transform-origin:0 0;">Сохранить и отправить</div>
<div id="t24" style="position:absolute;left:61px;top:406.42px;font-size:12.5px;line-height:12.5px;font-weight:400;color:#000;white-space:pre;transform:scaleX(0.9990);transform-origin:0 0;">Справка</div>
<div id="t25" style="position:absolute;left:84px;top:440.69px;font-size:11px;line-height:11px;font-weight:400;color:#000;white-space:pre;transform:scaleX(1.0232);transform-origin:0 0;">Параметры</div>
<div id="t26" style="position:absolute;left:84px;top:468.69px;font-size:11px;line-height:11px;font-weight:400;color:#000;white-space:pre;transform:scaleX(1.0024);transform-origin:0 0;">Выход</div>
<div id="t27" style="position:absolute;left:286px;top:163.84px;font-size:12px;line-height:12px;font-weight:400;color:#000;white-space:pre;transform:scaleX(0.9666);transform-origin:0 0;">Печать</div>
<div id="t28" style="position:absolute;left:364px;top:110.00px;font-size:13px;line-height:13px;font-weight:700;color:#4b4b4b;white-space:pre;transform:scaleX(0.9914);transform-origin:0 0;">Печать</div>
<div id="t29" style="position:absolute;left:364px;top:140.84px;font-size:12px;line-height:12px;font-weight:400;color:#000;white-space:pre;transform:scaleX(1.0025);transform-origin:0 0;">Копии:</div>
<div id="t30" style="position:absolute;left:416.5px;top:142.34px;font-size:12px;line-height:12px;font-weight:400;color:#000;white-space:pre;">1</div>
<div id="t31" style="position:absolute;left:265px;top:208.00px;font-size:13px;line-height:13px;font-weight:700;color:#4b4b4b;white-space:pre;transform:scaleX(0.9877);transform-origin:0 0;">Принтер</div>
<div id="t32" style="position:absolute;left:302px;top:239.84px;font-size:12px;line-height:12px;font-weight:400;color:#000;white-space:pre;transform:scaleX(0.9206);transform-origin:0 0;">HP Deskjet F4100 series</div>
<div id="t33" style="position:absolute;left:302px;top:257.84px;font-size:12px;line-height:12px;font-weight:400;color:#6d6d6d;white-space:pre;transform:scaleX(1.0093);transform-origin:0 0;">Не подключен</div>
<div id="t34" style="position:absolute;left:377px;top:280.54px;font-size:12px;line-height:12px;font-weight:400;color:#444;white-space:pre;transform:scaleX(0.9822);transform-origin:0 0;">Свойства принтера</div>
<div id="t35" style="position:absolute;left:265px;top:308.00px;font-size:13px;line-height:13px;font-weight:700;color:#4b4b4b;white-space:pre;transform:scaleX(0.9730);transform-origin:0 0;">Настройка</div>
<div id="t36" style="position:absolute;left:302px;top:339.84px;font-size:12px;line-height:12px;font-weight:400;color:#000;white-space:pre;transform:scaleX(0.9850);transform-origin:0 0;">Напечатать активные листы</div>
<div id="t37" style="position:absolute;left:302px;top:357.84px;font-size:12px;line-height:12px;font-weight:400;color:#6d6d6d;white-space:pre;transform:scaleX(0.9882);transform-origin:0 0;">Напечатать только активны...</div>
<div id="t38" style="position:absolute;left:265px;top:382.84px;font-size:12px;line-height:12px;font-weight:400;color:#000;white-space:pre;transform:scaleX(0.9887);transform-origin:0 0;">Страницы:</div>
<div id="t39" style="position:absolute;left:408px;top:381.84px;font-size:12px;line-height:12px;font-weight:400;color:#000;white-space:pre;">-</div>
<div id="t40" style="position:absolute;left:302px;top:411.84px;font-size:12px;line-height:12px;font-weight:400;color:#000;white-space:pre;transform:scaleX(0.9958);transform-origin:0 0;">Односторонняя печать</div>
<div id="t41" style="position:absolute;left:302px;top:429.84px;font-size:12px;line-height:12px;font-weight:400;color:#6d6d6d;white-space:pre;transform:scaleX(0.9864);transform-origin:0 0;">Печатать только на одной с...</div>
<div id="t42" style="position:absolute;left:302px;top:455.84px;font-size:12px;line-height:12px;font-weight:400;color:#000;white-space:pre;transform:scaleX(1.0021);transform-origin:0 0;">Разобрать по копиям</div>
<div id="t43" style="position:absolute;left:302px;top:473.84px;font-size:12px;line-height:12px;font-weight:400;color:#6d6d6d;white-space:pre;transform:scaleX(0.8800);transform-origin:0 0;">1,2,3</div>
<div id="t44" style="position:absolute;left:337.6px;top:473.84px;font-size:12px;line-height:12px;font-weight:400;color:#6d6d6d;white-space:pre;transform:scaleX(0.8800);transform-origin:0 0;">1,2,3</div>
<div id="t45" style="position:absolute;left:373.8px;top:473.84px;font-size:12px;line-height:12px;font-weight:400;color:#6d6d6d;white-space:pre;transform:scaleX(0.8800);transform-origin:0 0;">1,2,3</div>
<div id="t46" style="position:absolute;left:302px;top:507.84px;font-size:12px;line-height:12px;font-weight:400;color:#000;white-space:pre;transform:scaleX(0.9919);transform-origin:0 0;">Книжная ориентация</div>
<div id="t47" style="position:absolute;left:302px;top:543.64px;font-size:12px;line-height:12px;font-weight:400;color:#000;white-space:pre;transform:scaleX(0.8851);transform-origin:0 0;">A4</div>
<div id="t48" style="position:absolute;left:302px;top:561.34px;font-size:12px;line-height:12px;font-weight:400;color:#6d6d6d;white-space:pre;transform:scaleX(0.9462);transform-origin:0 0;">21 см x 29,7 см</div>
<div id="t49" style="position:absolute;left:302px;top:595.84px;font-size:12px;line-height:12px;font-weight:400;color:#000;white-space:pre;transform:scaleX(0.9853);transform-origin:0 0;">Настраиваемые поля</div>
<div id="t50" style="position:absolute;left:302px;top:631.84px;font-size:12px;line-height:12px;font-weight:400;color:#000;white-space:pre;transform:scaleX(1.0208);transform-origin:0 0;">Текущий</div>
<div id="t51" style="position:absolute;left:302px;top:649.84px;font-size:12px;line-height:12px;font-weight:400;color:#6d6d6d;white-space:pre;transform:scaleX(0.9830);transform-origin:0 0;">Печать листов с фактическ...</div>
<div id="t52" style="position:absolute;left:362px;top:672.54px;font-size:12px;line-height:12px;font-weight:400;color:#444;white-space:pre;transform:scaleX(1.0001);transform-origin:0 0;">Параметры страницы</div>
<div id="t53" style="position:absolute;left:635px;top:183.00px;font-size:13px;line-height:13px;font-weight:400;color:#000;white-space:pre;transform:scaleX(1.0208);transform-origin:0 0;">Наименование</div>
<div id="t54" style="position:absolute;left:597px;top:202.60px;font-size:13px;line-height:13px;font-weight:400;color:#000;white-space:pre;transform:scaleX(0.9979);transform-origin:0 0;">Картофель</div>
<div id="t55" style="position:absolute;left:597px;top:221.60px;font-size:13px;line-height:13px;font-weight:400;color:#000;white-space:pre;transform:scaleX(0.9979);transform-origin:0 0;">Картофель</div>
<div id="t56" style="position:absolute;left:597px;top:241.60px;font-size:13px;line-height:13px;font-weight:400;color:#000;white-space:pre;transform:scaleX(0.9979);transform-origin:0 0;">Картофель</div>
<div id="t57" style="position:absolute;left:597px;top:260.60px;font-size:13px;line-height:13px;font-weight:400;color:#000;white-space:pre;transform:scaleX(0.9979);transform-origin:0 0;">Картофель</div>
<div id="t58" style="position:absolute;left:597px;top:279.60px;font-size:13px;line-height:13px;font-weight:400;color:#000;white-space:pre;transform:scaleX(0.9979);transform-origin:0 0;">Картофель</div>
<div id="t59" style="position:absolute;left:597px;top:299.60px;font-size:13px;line-height:13px;font-weight:400;color:#000;white-space:pre;transform:scaleX(0.9979);transform-origin:0 0;">Картофель</div>
<div id="t60" style="position:absolute;left:597px;top:318.60px;font-size:13px;line-height:13px;font-weight:400;color:#000;white-space:pre;transform:scaleX(0.9979);transform-origin:0 0;">Картофель</div>
<div id="t61" style="position:absolute;left:597px;top:337.60px;font-size:13px;line-height:13px;font-weight:400;color:#000;white-space:pre;transform:scaleX(0.9979);transform-origin:0 0;">Картофель</div>
<div id="t62" style="position:absolute;left:597px;top:357.60px;font-size:13px;line-height:13px;font-weight:400;color:#000;white-space:pre;transform:scaleX(0.9979);transform-origin:0 0;">Картофель</div>
<div id="t63" style="position:absolute;left:597px;top:376.60px;font-size:13px;line-height:13px;font-weight:400;color:#000;white-space:pre;transform:scaleX(0.9979);transform-origin:0 0;">Картофель</div>
<div id="t64" style="position:absolute;left:597px;top:395.60px;font-size:13px;line-height:13px;font-weight:400;color:#000;white-space:pre;transform:scaleX(0.9979);transform-origin:0 0;">Картофель</div>
<div id="t65" style="position:absolute;left:597px;top:415.60px;font-size:13px;line-height:13px;font-weight:400;color:#000;white-space:pre;transform:scaleX(0.9979);transform-origin:0 0;">Картофель</div>
<div id="t66" style="position:absolute;left:597px;top:434.60px;font-size:13px;line-height:13px;font-weight:400;color:#000;white-space:pre;transform:scaleX(0.9979);transform-origin:0 0;">Картофель</div>
<div id="t67" style="position:absolute;left:597px;top:453.60px;font-size:13px;line-height:13px;font-weight:400;color:#000;white-space:pre;transform:scaleX(0.9979);transform-origin:0 0;">Картофель</div>
<div id="t68" style="position:absolute;left:597px;top:473.60px;font-size:13px;line-height:13px;font-weight:400;color:#000;white-space:pre;transform:scaleX(0.9979);transform-origin:0 0;">Картофель</div>
<div id="t69" style="position:absolute;left:597px;top:492.60px;font-size:13px;line-height:13px;font-weight:400;color:#000;white-space:pre;transform:scaleX(0.9979);transform-origin:0 0;">Картофель</div>
<div id="t70" style="position:absolute;left:597px;top:511.60px;font-size:13px;line-height:13px;font-weight:400;color:#000;white-space:pre;transform:scaleX(0.9979);transform-origin:0 0;">Картофель</div>
<div id="t71" style="position:absolute;left:597px;top:531.60px;font-size:13px;line-height:13px;font-weight:400;color:#000;white-space:pre;transform:scaleX(0.9979);transform-origin:0 0;">Картофель</div>
<div id="t72" style="position:absolute;left:597px;top:550.60px;font-size:13px;line-height:13px;font-weight:400;color:#000;white-space:pre;transform:scaleX(0.9979);transform-origin:0 0;">Картофель</div>
<div id="t73" style="position:absolute;left:597px;top:569.60px;font-size:13px;line-height:13px;font-weight:400;color:#000;white-space:pre;transform:scaleX(0.9979);transform-origin:0 0;">Картофель</div>
<div id="t74" style="position:absolute;left:597px;top:589.60px;font-size:13px;line-height:13px;font-weight:400;color:#000;white-space:pre;transform:scaleX(0.9979);transform-origin:0 0;">Картофель</div>
<div id="t75" style="position:absolute;left:597px;top:608.60px;font-size:13px;line-height:13px;font-weight:400;color:#000;white-space:pre;transform:scaleX(0.9979);transform-origin:0 0;">Картофель</div>
<div id="t76" style="position:absolute;left:597px;top:627.60px;font-size:13px;line-height:13px;font-weight:400;color:#000;white-space:pre;transform:scaleX(0.9979);transform-origin:0 0;">Картофель</div>
<div id="t77" style="position:absolute;left:551px;top:668.84px;font-size:12px;line-height:12px;font-weight:400;color:#000;white-space:pre;">1</div>
<div id="t78" style="position:absolute;left:576px;top:668.84px;font-size:12px;line-height:12px;font-weight:400;color:#000;white-space:pre;transform:scaleX(0.9346);transform-origin:0 0;">из 12</div></body></html>
